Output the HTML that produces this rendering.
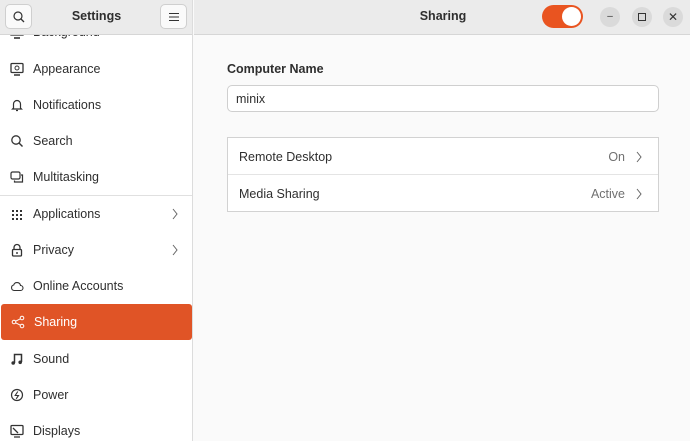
<!DOCTYPE html>
<html><head><meta charset="utf-8"><style>
*{margin:0;padding:0;box-sizing:border-box}
body{width:690px;height:441px;overflow:hidden;font-family:"Liberation Sans",sans-serif;font-size:12.5px;color:#2e2e2e;background:#fafafa;position:relative}
.side{position:absolute;left:0;top:0;width:193px;height:441px;background:#fff;border-right:1px solid #dcdcdc;overflow:hidden}
.hdr{position:absolute;top:0;height:35px;background:#ebebeb;border-bottom:1px solid #d6d6d6}
.item{position:absolute;left:0;width:193px;height:36px;display:flex;align-items:center}
.item .ic{position:absolute;left:10px;top:11px;width:14px;height:14px}
.item .t{position:absolute;left:33px}
.item .ch{position:absolute;left:172px;top:12px}
.sel{background:#e05426;color:#fff;left:1px;width:191px;border-radius:3px}
.btn{position:absolute;top:4px;width:27px;height:25px;border:1px solid #cfcfcf;border-radius:5px;background:#fafafa}
.wc{position:absolute;top:7px;width:20px;height:20px;border-radius:50%;background:#dadada;font-size:10px;text-align:center;line-height:20px;color:#333}
.row{position:absolute;left:0;width:100%;height:37px;display:flex;align-items:center;padding-left:11px}
.row .v{position:absolute;right:33px;color:#707070}
.row .c{position:absolute;right:16px;top:13px}
</style></head><body>
<div class="side">
  <div class="item" style="top:14px"><svg class="ic" viewBox="0 0 14 14"><rect x="1" y="1" width="12" height="9" fill="none" stroke="#333" stroke-width="1.3"/><path d="M4 13h6" stroke="#333" stroke-width="1.6"/></svg><span class="t">Background</span></div>
  <div class="item" style="top:51px"><svg class="ic" viewBox="0 0 14 14"><rect x="1" y="1.5" width="12" height="9" rx="1" fill="none" stroke="#333" stroke-width="1.3"/><circle cx="7" cy="6" r="2" fill="none" stroke="#333"/><path d="M4 13h6" stroke="#333" stroke-width="1.5"/></svg><span class="t">Appearance</span></div>
  <div class="item" style="top:87px"><svg class="ic" viewBox="0 0 14 14"><path d="M3.5 10V6a3.5 3.5 0 0 1 7 0v4l1 1h-9z M6 12.5h2" fill="none" stroke="#333" stroke-width="1.2"/></svg><span class="t">Notifications</span></div>
  <div class="item" style="top:123px"><svg class="ic" viewBox="0 0 14 14"><circle cx="6" cy="6" r="4.2" fill="none" stroke="#333" stroke-width="1.3"/><path d="M9 9l3.5 3.5" stroke="#333" stroke-width="1.4"/></svg><span class="t">Search</span></div>
  <div class="item" style="top:159px"><svg class="ic" viewBox="0 0 14 14"><rect x="1" y="2" width="9" height="7" rx="1.5" fill="none" stroke="#333" stroke-width="1.2"/><path d="M11 5h1.5v7h-8v-1.5" fill="none" stroke="#333" stroke-width="1.2"/></svg><span class="t">Multitasking</span></div>
  <div style="position:absolute;top:195px;left:0;width:193px;border-top:1px solid #e0e0e0"></div>
  <div class="item" style="top:196px"><svg class="ic" viewBox="0 0 14 14" fill="#333"><rect x="2" y="3" width="2" height="2"/><rect x="6" y="3" width="2" height="2"/><rect x="10" y="3" width="2" height="2"/><rect x="2" y="7" width="2" height="2"/><rect x="6" y="7" width="2" height="2"/><rect x="10" y="7" width="2" height="2"/><rect x="2" y="11" width="2" height="2"/><rect x="6" y="11" width="2" height="2"/><rect x="10" y="11" width="2" height="2"/></svg><span class="t">Applications</span><svg class="ch" width="6" height="12" viewBox="0 0 6 12"><path d="M1 1l4 5-4 5" fill="none" stroke="#666" stroke-width="1"/></svg></div>
  <div class="item" style="top:232px"><svg class="ic" viewBox="0 0 14 14"><path d="M4 6.5V4.5a3 3 0 0 1 6 0v2" fill="none" stroke="#333" stroke-width="1.3"/><rect x="2.5" y="6.5" width="9" height="6.5" rx="1" fill="none" stroke="#333" stroke-width="1.3"/><rect x="6.3" y="9" width="1.4" height="2" fill="#333"/></svg><span class="t">Privacy</span><svg class="ch" width="6" height="12" viewBox="0 0 6 12"><path d="M1 1l4 5-4 5" fill="none" stroke="#666" stroke-width="1"/></svg></div>
  <div class="item" style="top:268px"><svg class="ic" viewBox="0 0 14 14"><path d="M4 11.5h6.5a2.5 2.5 0 0 0 0-5 3.5 3.5 0 0 0-6.8-.5A2.8 2.8 0 0 0 4 11.5z" fill="none" stroke="#333" stroke-width="1.1"/></svg><span class="t">Online Accounts</span></div>
  <div class="item sel" style="top:304px"><svg class="ic" viewBox="0 0 14 14"><circle cx="3" cy="7" r="1.8" fill="none" stroke="#fff"/><circle cx="11" cy="3" r="1.8" fill="none" stroke="#fff"/><circle cx="11" cy="11" r="1.8" fill="none" stroke="#fff"/><path d="M4.6 6.2l4.8-2.4M4.6 7.8l4.8 2.4" stroke="#fff"/></svg><span class="t">Sharing</span></div>
  <div class="item" style="top:341px"><svg class="ic" viewBox="0 0 14 14"><path d="M4.5 11V2.5h7V10" fill="none" stroke="#333" stroke-width="1.5"/><circle cx="3.2" cy="11" r="1.8" fill="#333"/><circle cx="10.2" cy="10.3" r="1.8" fill="#333"/></svg><span class="t">Sound</span></div>
  <div class="item" style="top:377px"><svg class="ic" viewBox="0 0 14 14"><circle cx="7" cy="7" r="5.5" fill="none" stroke="#333" stroke-width="1.2"/><path d="M7.8 3.5L5.2 7.5h3.3L6.2 10.8" fill="none" stroke="#333" stroke-width="1.1"/></svg><span class="t">Power</span></div>
  <div class="item" style="top:413px"><svg class="ic" viewBox="0 0 14 14"><rect x="1" y="1.5" width="12" height="9" rx="1" fill="none" stroke="#333" stroke-width="1.3"/><path d="M4 13h6M3 4l5 5" stroke="#333" stroke-width="1.3"/></svg><span class="t">Displays</span></div>
  <div class="hdr" style="left:0;width:193px">
    <div class="btn" style="left:5px"><svg style="position:absolute;left:7px;top:6px" width="12" height="12" viewBox="0 0 12 12"><circle cx="5" cy="5" r="4" fill="none" stroke="#333" stroke-width="1.2"/><path d="M8 8l3 3" stroke="#333" stroke-width="1.3"/></svg></div>
    <div style="position:absolute;left:0;width:193px;top:9px;text-align:center;font-weight:bold;font-size:12.5px">Settings</div>
    <div class="btn" style="left:160px"><svg style="position:absolute;left:8px;top:7px" width="10" height="10" viewBox="0 0 10 10"><path d="M0 1.5h10M0 5h10M0 8.5h10" stroke="#333" stroke-width="1.1"/></svg></div>
  </div>
</div>
<div class="hdr" style="left:194px;width:496px">
  <div style="position:absolute;left:0;width:498px;top:9px;text-align:center;font-weight:bold">Sharing</div>
  <div style="position:absolute;left:348px;top:5px;width:41px;height:23px;border-radius:12px;background:#e95420"><div style="position:absolute;right:2px;top:2px;width:19px;height:19px;border-radius:50%;background:#fff"></div></div>
  <div class="wc" style="left:406px">–</div>
  <div class="wc" style="left:438px"><div style="position:absolute;left:6px;top:6px;width:8px;height:8px;border:1.3px solid #333"></div></div>
  <div class="wc" style="left:469px;font-size:12px">✕</div>
</div>
<div style="position:absolute;left:227px;top:62px;font-weight:bold">Computer Name</div>
<div style="position:absolute;left:227px;top:85px;width:432px;height:27px;border:1px solid #cfcfcf;border-radius:5px;background:#fff;padding:6px 0 0 8px">minix</div>
<div style="position:absolute;left:227px;top:137px;width:432px;height:75px;border:1px solid #d2d2d2;background:#fff">
  <div class="row" style="top:0">Remote Desktop<span class="v">On</span><svg class="c" width="6" height="12" viewBox="0 0 6 12"><path d="M1 1l4 5-4 5" fill="none" stroke="#666" stroke-width="1"/></svg></div>
  <div style="position:absolute;top:36px;left:0;width:100%;border-top:1px solid #e4e4e4"></div>
  <div class="row" style="top:37px">Media Sharing<span class="v">Active</span><svg class="c" width="6" height="12" viewBox="0 0 6 12"><path d="M1 1l4 5-4 5" fill="none" stroke="#666" stroke-width="1"/></svg></div>
</div>
</body></html>
